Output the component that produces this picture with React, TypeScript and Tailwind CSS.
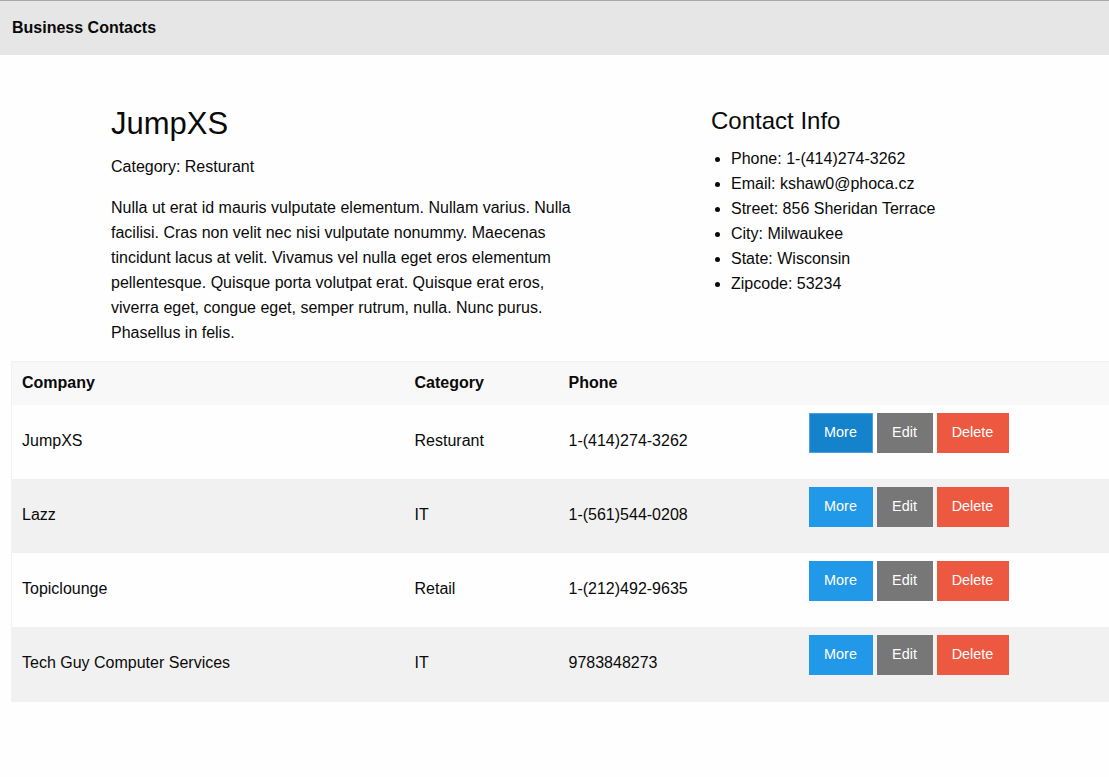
import React from 'react';

type Contact = {
  company: string;
  category: string;
  phone: string;
};

const contacts: Contact[] = [
  { company: 'JumpXS', category: 'Resturant', phone: '1-(414)274-3262' },
  { company: 'Lazz', category: 'IT', phone: '1-(561)544-0208' },
  { company: 'Topiclounge', category: 'Retail', phone: '1-(212)492-9635' },
  { company: 'Tech Guy Computer Services', category: 'IT', phone: '9783848273' },
];

const info = [
  'Phone: 1-(414)274-3262',
  'Email: kshaw0@phoca.cz',
  'Street: 856 Sheridan Terrace',
  'City: Milwaukee',
  'State: Wisconsin',
  'Zipcode: 53234',
];

export default function App() {
  return (
    <div className="min-h-[777px] bg-[#fefefe] text-[#0a0a0a] font-['Liberation_Sans',Arial,sans-serif] overflow-x-hidden">
      <div className="h-[55px] border-t border-[#a8a8a8] bg-[#e6e6e6] flex items-center px-3">
        <span className="text-base font-bold leading-6 -mt-[1px]">Business Contacts</span>
      </div>

      {/* selected contact */}
      <div className="flex pt-[50px] pl-[111px]">
        <div className="w-[600px]">
          <div className="w-[480px]">
            <h1 className="text-[31px] leading-[38px] mb-3">JumpXS</h1>
            <p className="text-base leading-6 mb-4">Category: Resturant</p>
            <p className="text-base leading-[25px]">
              Nulla ut erat id mauris vulputate elementum. Nullam varius. Nulla facilisi. Cras non velit nec nisi
              vulputate nonummy. Maecenas tincidunt lacus at velit. Vivamus vel nulla eget eros elementum
              pellentesque. Quisque porta volutpat erat. Quisque erat eros, viverra eget, congue eget, semper
              rutrum, nulla. Nunc purus. Phasellus in felis.
            </p>
          </div>
        </div>
        <div>
          <h2 className="text-2xl leading-[29px] mt-[1px] mb-[11px]">Contact Info</h2>
          <ul className="list-disc pl-5 text-base leading-[25px]">
            {info.map((line) => (
              <li key={line}>{line}</li>
            ))}
          </ul>
        </div>
      </div>

      <div className="pl-[11px] mt-4">
        <table className="w-[1110px] table-fixed border-collapse border border-[#f1f1f1] text-base">
          <thead className="bg-[#f8f8f8]">
            <tr className="text-left">
              <th className="w-[393px] pl-[10px] pt-2 pb-[10px] leading-[25px] font-bold">Company</th>
              <th className="w-[154px] pl-[10px] pt-2 pb-[10px] leading-[25px] font-bold">Category</th>
              <th className="w-[240px] pl-[10px] pt-2 pb-[10px] leading-[25px] font-bold">Phone</th>
              <th className="pl-[10px] pt-2 pb-[10px]"></th>
            </tr>
          </thead>
          <tbody>
            {contacts.map((c, i) => (
              <tr key={c.company} className={i % 2 === 1 ? 'bg-[#f1f1f1]' : 'bg-[#fefefe]'}>
                <td className="pl-[10px] pt-2 pb-[10px] align-middle leading-6">{c.company}</td>
                <td className="pl-[10px] pt-2 pb-[10px] align-middle leading-6">{c.category}</td>
                <td className="pl-[10px] pt-2 pb-[10px] align-middle leading-6">{c.phone}</td>
                <td className="pl-[10px] pt-2 pb-[10px] align-middle">
                  <div className="flex gap-[4px] mb-4 text-[14.4px] text-white">
                    <button
                      className={`w-[64px] h-10 border ${
                        i === 0 ? 'bg-[#1583cc] border-[#4f9fe0]' : 'bg-[#2199e8] border-transparent'
                      }`}
                    >
                      More
                    </button>
                    <button className="w-[56px] h-10 border border-transparent bg-[#777777]">Edit</button>
                    <button className="w-[72px] h-10 border border-transparent bg-[#ec5840]">Delete</button>
                  </div>
                </td>
              </tr>
            ))}
          </tbody>
        </table>
      </div>
    </div>
  );
}
